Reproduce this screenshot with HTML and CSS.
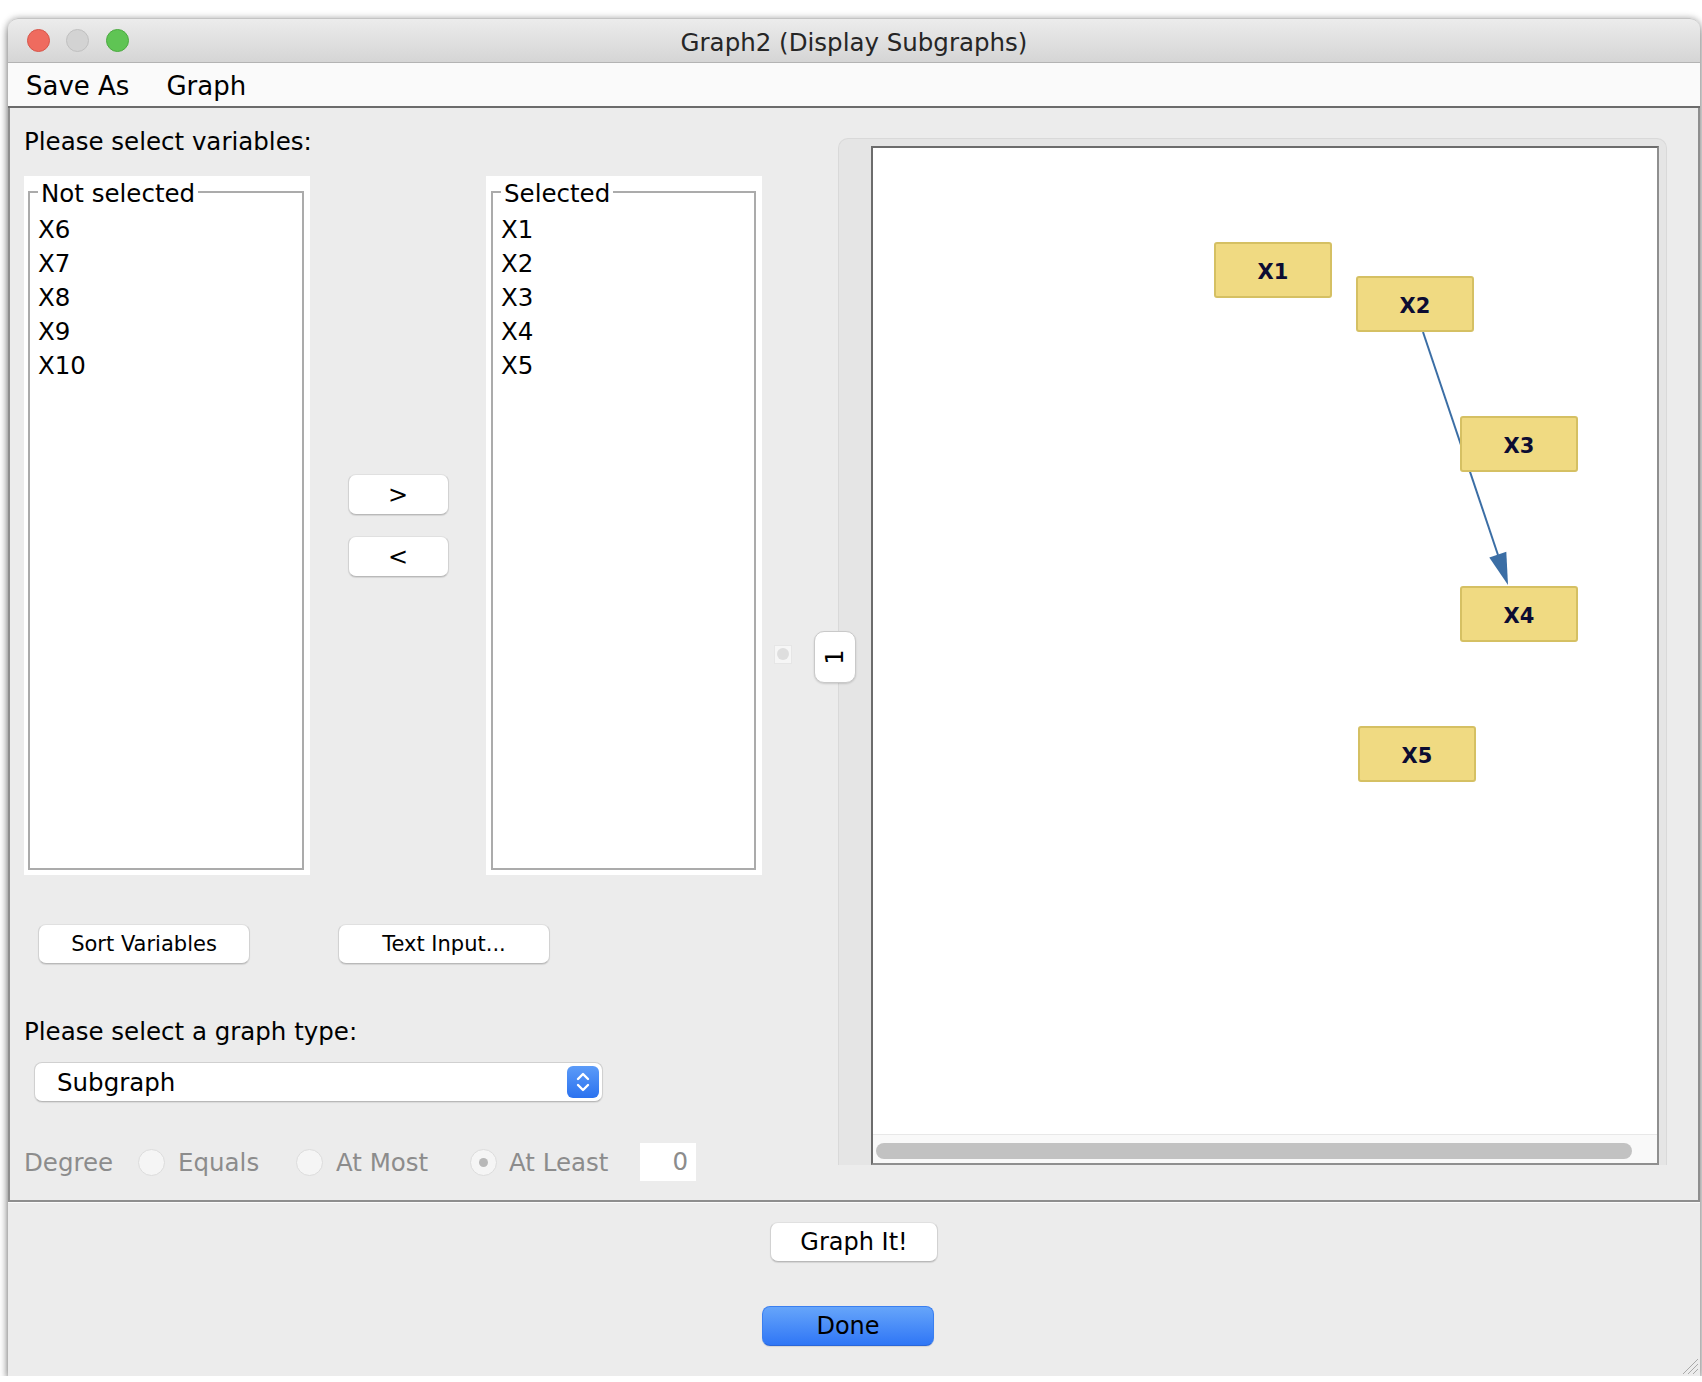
FILE: index.html
```html
<!DOCTYPE html>
<html>
<head>
  <title>Graph2 (Display Subgraphs)</title>
  <link rel="stylesheet" href="styles.css">
</head>
<body>
  <div class="window">
    <div class="titlebar">
      <div class="lights">
        <span class="light close"></span>
        <span class="light min"></span>
        <span class="light max"></span>
      </div>
      <div class="title">Graph2 (Display Subgraphs)</div>
      <div></div>
    </div>

    <div class="menubar">
      <span>Save As</span>
      <span>Graph</span>
    </div>

    <div class="main">
      <div class="left">
        <div class="label">Please select variables:</div>

        <div class="lists">
          <div class="list-box">
            <fieldset class="list">
              <legend>Not selected</legend>
              <div class="item">X6</div>
              <div class="item">X7</div>
              <div class="item">X8</div>
              <div class="item">X9</div>
              <div class="item">X10</div>
            </fieldset>
          </div>
          <div class="movers">
            <button class="btn mover">&gt;</button>
            <button class="btn mover">&lt;</button>
          </div>
          <div class="list-box right">
            <fieldset class="list">
              <legend>Selected</legend>
              <div class="item">X1</div>
              <div class="item">X2</div>
              <div class="item">X3</div>
              <div class="item">X4</div>
              <div class="item">X5</div>
            </fieldset>
          </div>
        </div>

        <div class="tools">
          <button class="btn tool">Sort Variables</button>
          <button class="btn tool">Text Input...</button>
        </div>

        <div class="label type-label">Please select a graph type:</div>

        <div class="select">
          <span>Subgraph</span>
          <span class="stepper">
            <svg width="32" height="32" viewBox="0 0 32 32">
              <polyline points="11,13 16,8 21,13" fill="none" stroke="#fff" stroke-width="2.4" stroke-linecap="round" stroke-linejoin="round"/>
              <polyline points="11,19 16,24 21,19" fill="none" stroke="#fff" stroke-width="2.4" stroke-linecap="round" stroke-linejoin="round"/>
            </svg>
          </span>
        </div>

        <div class="degree">
          <span class="degree-label">Degree</span>
          <span class="option equals"><span class="radio"></span>Equals</span>
          <span class="option most"><span class="radio"></span>At Most</span>
          <span class="option least"><span class="radio checked"></span>At Least</span>
          <span class="field">0</span>
        </div>
      </div>

      <div class="side">
        <span class="mini-radio"><span></span></span>
      </div>

      <div class="tabs">
        <div class="tab"><span>1</span></div>
        <div class="tab-panel">
          <div class="canvas">
            <div class="graph">
              <svg class="edges" width="784" height="985">
                <line x1="550" y1="184" x2="625" y2="407" stroke="#3b6ea5" stroke-width="2"/>
                <polygon points="635,437 633.3,403.8 616.3,409.6" fill="#3b6ea5"/>
              </svg>
              <div class="node" style="left:341px; top:94px">X1</div>
              <div class="node" style="left:483px; top:128px">X2</div>
              <div class="node" style="left:587px; top:268px">X3</div>
              <div class="node" style="left:587px; top:438px">X4</div>
              <div class="node" style="left:485px; top:578px">X5</div>
            </div>
            <div class="hscroll"><div class="thumb"></div></div>
          </div>
        </div>
      </div>
    </div>

    <div class="footer">
      <button class="btn big">Graph It!</button>
      <button class="btn big done">Done</button>
      <svg class="grip" width="20" height="20" viewBox="0 0 20 20">
        <line x1="19" y1="4" x2="4" y2="19" stroke="#a9a9a9" stroke-width="1"/>
        <line x1="19" y1="9" x2="9" y2="19" stroke="#a9a9a9" stroke-width="1"/>
        <line x1="19" y1="14" x2="14" y2="19" stroke="#a9a9a9" stroke-width="1"/>
      </svg>
    </div>
  </div>
</body>
</html>
```

FILE: styles.css
```css
* {
  box-sizing: border-box;
}
body {
  margin: 0;
  background: #fff;
  font-family: "DejaVu Sans", "Liberation Sans", sans-serif;
  font-size: 24.5px;
  color: #000;
}
.window {
  width: 1692px;
  height: 1358px;
  margin: 18px 0 0 8px;
  background: #ececec;
  border-radius: 10px 10px 0 0;
  box-shadow: 0 5px 8px rgba(0, 0, 0, 0.45), 0 0 7px rgba(0, 0, 0, 0.25);
  display: flex;
  flex-direction: column;
  overflow: hidden;
}

/* title bar */
.titlebar {
  height: 45px;
  flex: none;
  display: grid;
  grid-template-columns: 1fr auto 1fr;
  align-items: center;
  background: linear-gradient(#ececec, #d5d5d5);
  border-top: 1px solid #c4c4c4;
  border-bottom: 1px solid #b3b3b3;
  border-radius: 10px 10px 0 0;
}
.lights {
  display: flex;
  gap: 16.7px;
  padding-left: 18.5px;
}
.light {
  width: 23px;
  height: 23px;
  border-radius: 50%;
}
.light.close {
  background: #ef6b5f;
  border: 1px solid #d7564a;
}
.light.min {
  background: #d3d3d3;
  border: 1px solid #c0c0c0;
}
.light.max {
  background: #5fc454;
  border: 1px solid #4caa41;
}
.title {
  font-size: 24.5px;
  color: #262626;
  padding-top: 4px;
}

/* menu */
.menubar {
  height: 45px;
  flex: none;
  display: flex;
  align-items: center;
  gap: 37px;
  padding: 2px 0 0 18px;
  background: #fafafa;
  border-bottom: 2px solid #6b6b6b;
  font-size: 26px;
}

/* main panel */
.main {
  height: 1094px;
  flex: none;
  display: flex;
  border: 2px solid #8e8e8e;
  border-top: none;
}
.left {
  width: 752px;
  flex: none;
  padding: 18px 0 0 14px;
  display: flex;
  flex-direction: column;
}
.label {
  height: 30px;
  padding-top: 2px;
  line-height: 28px;
}
.lists {
  margin-top: 20px;
  height: 699px;
  display: flex;
}
.list-box {
  width: 286px;
  background: #fff;
  padding: 1px 6px 5px 4px;
  display: flex;
}
.list-box.right {
  width: 276px;
  padding-left: 5px;
}
.list {
  flex: 1;
  min-width: 0;
  margin: 0;
  padding: 6px 8px 0 8px;
  border: 2px solid #ababab;
}
.list legend {
  padding: 4px 3px 0;
  line-height: 26px;
}
.item {
  line-height: 34px;
  height: 34px;
}
.movers {
  width: 176px;
  display: flex;
  flex-direction: column;
  align-items: center;
  justify-content: center;
  gap: 21px;
}

/* buttons */
.btn {
  font-family: inherit;
  color: #000;
  background: #fff;
  border: 1px solid #d2d2d2;
  border-top-color: #e0e0e0;
  border-bottom-color: #b9b9b9;
  border-radius: 8px;
  box-shadow: 0 1px 1px rgba(0, 0, 0, 0.1);
  padding: 0;
}
.mover {
  width: 101px;
  height: 41px;
  font-size: 24px;
}
.tools {
  margin-top: 49px;
  padding-left: 14px;
  display: flex;
  gap: 88px;
}
.tool {
  width: 212px;
  height: 40px;
  font-size: 21px;
}
.type-label {
  margin-top: 52px;
}
.select {
  margin: 16px 0 0 10px;
  width: 569px;
  height: 40px;
  background: #fff;
  border: 1px solid #d0d0d0;
  border-bottom-color: #b8b8b8;
  border-radius: 8px;
  box-shadow: 0 1px 1px rgba(0, 0, 0, 0.08);
  display: flex;
  align-items: center;
  justify-content: space-between;
  padding: 0 3px 0 22px;
}
.stepper {
  width: 32px;
  height: 32px;
  border-radius: 6px;
  background: linear-gradient(#5b9bf8, #2b72ef);
  display: flex;
}
.degree {
  margin-top: 41px;
  height: 38px;
  display: flex;
  align-items: center;
  color: #8c8c8c;
}
.degree-label {
  width: 114px;
}
.option {
  display: flex;
  align-items: center;
  gap: 13px;
  padding-top: 1px;
}
.option.equals {
  width: 158px;
}
.option.most {
  width: 174px;
}
.option.least {
  width: 170px;
  gap: 12px;
}
.radio {
  width: 27px;
  height: 27px;
  flex: none;
  border-radius: 50%;
  background: #f5f5f5;
  border: 1px solid #dcdcdc;
  display: flex;
  align-items: center;
  justify-content: center;
}
.radio.checked::after {
  content: "";
  width: 9px;
  height: 9px;
  border-radius: 50%;
  background: #b8b8b8;
}
.field {
  width: 56px;
  height: 38px;
  background: #fff;
  text-align: right;
  line-height: 38px;
  padding-right: 8px;
}

/* side strip */
.side {
  width: 52px;
  flex: none;
  padding-left: 12px;
  display: flex;
  align-items: center;
}
.mini-radio {
  width: 18px;
  height: 19px;
  background: #f6f6f6;
  border: 1px solid #e6e6e6;
  display: flex;
  align-items: center;
  justify-content: center;
}
.mini-radio span {
  width: 12px;
  height: 12px;
  border-radius: 50%;
  background: #dedede;
}

/* tabbed graph area */
.tabs {
  position: relative;
  width: 853px;
  height: 1027px;
  margin-top: 30px;
  padding-left: 24px;
  display: flex;
}
.tab {
  position: absolute;
  left: 0;
  top: 493px;
  width: 42px;
  height: 52px;
  background: #fff;
  border: 1px solid #c9c9c9;
  border-radius: 10px;
  box-shadow: 0 1px 2px rgba(0, 0, 0, 0.15);
  display: flex;
  align-items: center;
  justify-content: center;
  z-index: 1;
}
.tab span {
  display: block;
  transform: rotate(-90deg);
  font-size: 24px;
}
.tab-panel {
  flex: 1;
  background: #e5e5e5;
  border: 1px solid #d9d9d9;
  border-bottom: none;
  border-radius: 10px 10px 0 0;
  padding: 7px 7px 0 32px;
  display: flex;
}
.canvas {
  flex: 1;
  background: #fff;
  border: 2px solid #8f8f8f;
  border-top-color: #6c6c6c;
  border-left-color: #6c6c6c;
  display: flex;
  flex-direction: column;
}
.graph {
  position: relative;
  flex: 1;
}
.edges {
  position: absolute;
  left: 0;
  top: 0;
}
.node {
  position: absolute;
  width: 118px;
  height: 56px;
  padding-top: 3px;
  background: #f0da82;
  border: 2px solid #d5c063;
  border-radius: 3px;
  display: flex;
  align-items: center;
  justify-content: center;
  font-weight: bold;
  font-size: 21px;
  color: #0c0c32;
}
.hscroll {
  height: 29px;
  flex: none;
  background: #f9f9f9;
  border-top: 1px solid #e8e8e8;
  padding: 8px 0 0 3px;
}
.thumb {
  width: 756px;
  height: 16px;
  border-radius: 8px;
  background: #c2c2c2;
}

/* footer */
.footer {
  position: relative;
  flex: 1;
  border-top: 1px solid #fbfbfb;
  display: flex;
  flex-direction: column;
  align-items: center;
  padding-top: 19px;
  gap: 44px;
}
.big {
  height: 40px;
  font-size: 24px;
}
.footer .big:first-child {
  width: 168px;
}
.done {
  width: 172px;
  margin-right: 12px;
  background: linear-gradient(#66a5fa, #2f76f6);
  border: 1px solid #3a7ff0;
  border-bottom-color: #2a66d8;
}
.grip {
  position: absolute;
  right: 1px;
  bottom: 1px;
}
```
